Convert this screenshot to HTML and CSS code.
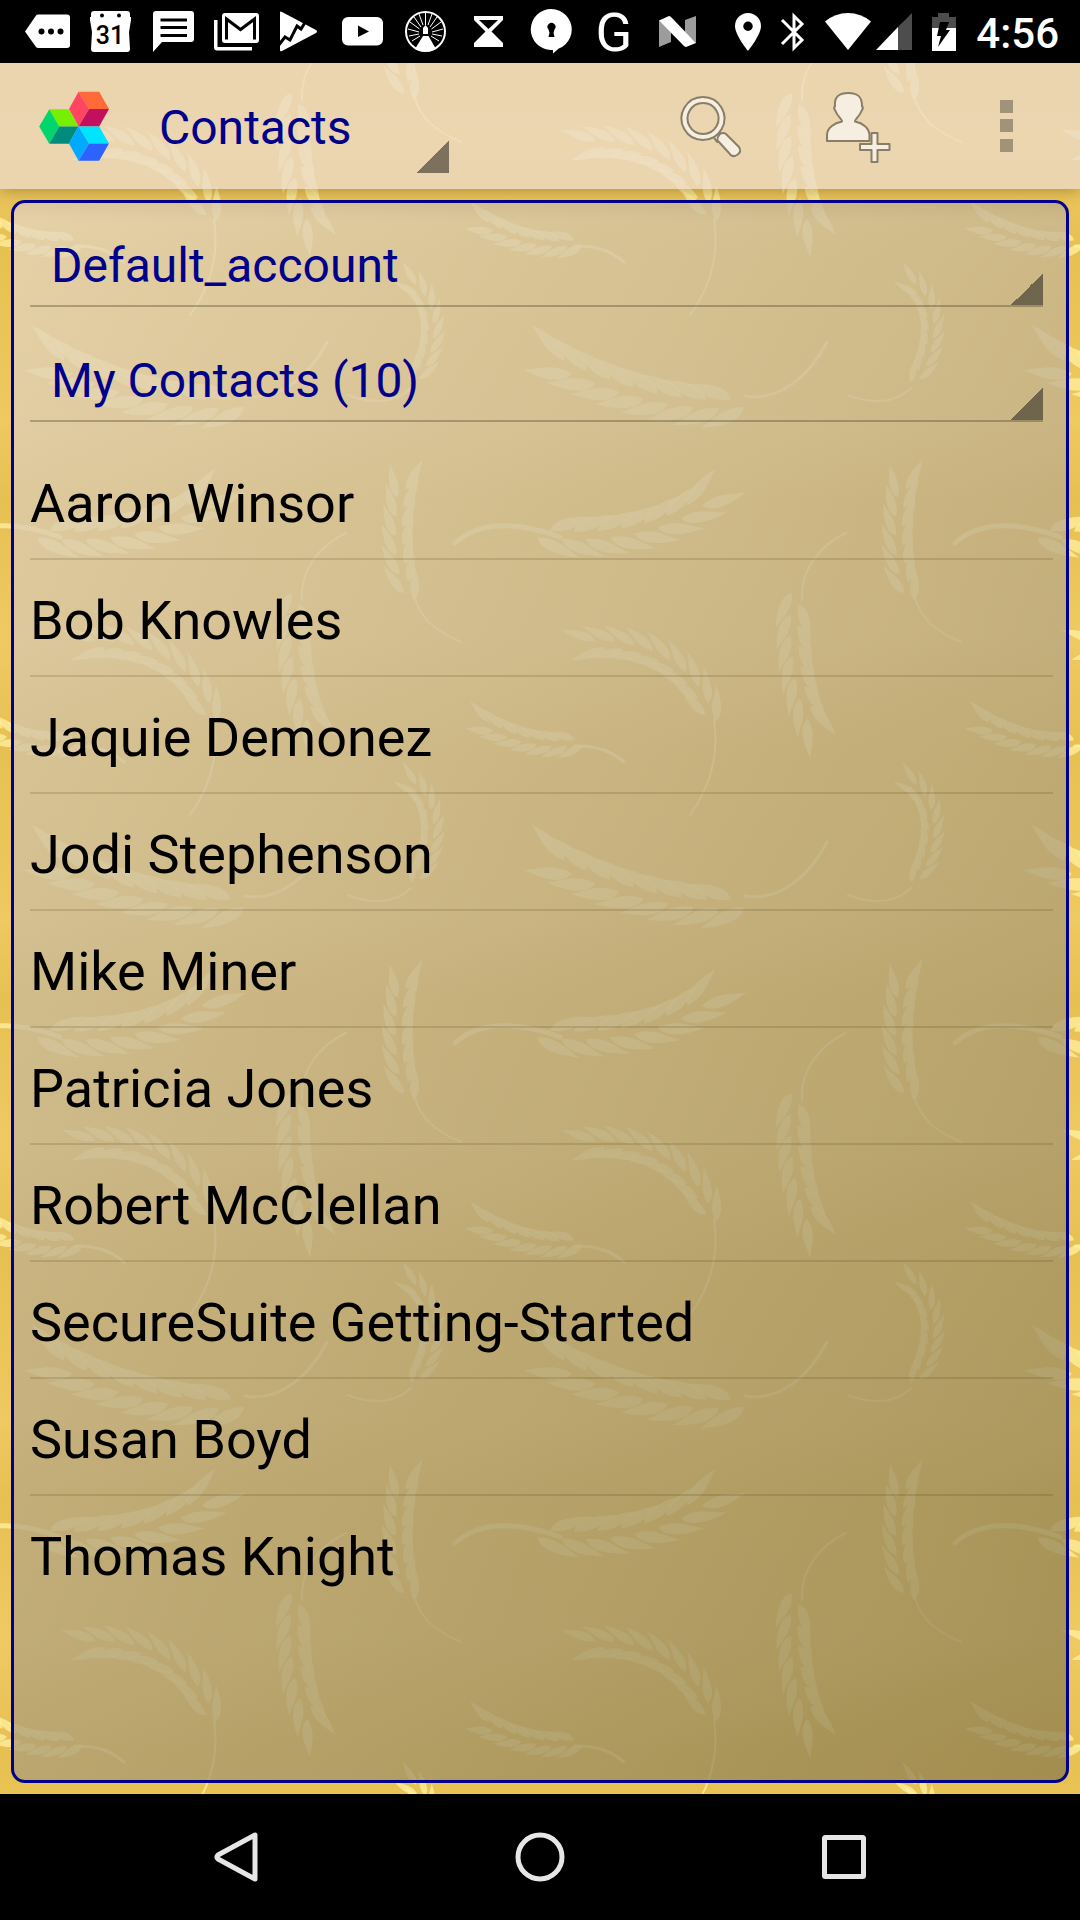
FILE: index.html
```html
<!DOCTYPE html>
<html lang="en">
<head>
<meta charset="utf-8">
<meta name="viewport" content="width=device-width, initial-scale=1">
<title>Contacts</title>
<link rel="stylesheet" href="styles.css">
</head>
<body>
<div class="screen">
  <svg class="wallpaper" aria-hidden="true"><defs><g id="wheat"></g></defs></svg>

  <div class="status-bar">
    <div class="notifications" aria-hidden="true">
      <svg viewBox="0 0 63 63"><path d="M9 31.500 20 15.500Q21 14.500 22 14.500H51Q54 14.500 54 17.500V45Q54 48 51 48H22Q21 48 20 47Z"/><g class="ink"><circle cx="25.500" cy="31.500" r="3"/><circle cx="35" cy="31.500" r="3"/><circle cx="44.500" cy="31.500" r="3"/></g></svg>
      <svg viewBox="0 0 63 63"><path d="M12 14Q12 11 15 11H48Q51 11 51 14V17H52V20L50 32 51 49Q51 52 48 52H15Q12 52 12 49L13 32 11 20V17H12Z"/><g class="ink"><circle cx="23" cy="15.500" r="2"/><circle cx="40" cy="15.500" r="2"/><text class="calendar-day" x="31" y="44" text-anchor="middle">31</text></g></svg>
      <svg viewBox="0 0 63 63"><path d="M11 52V14Q11 11 14 11H49Q52 11 52 14V39Q52 42 49 42H20Z"/><path class="ink-line" d="M18.500 20H45M18.500 27.500H45M18.500 35.500H45"/></svg>
      <svg viewBox="0 0 63 63"><path d="M9 20H12.500V47H47V50.500H12Q9 50.500 9 47Z"/><rect x="17" y="13" width="37" height="30" rx="3"/><path class="ink-line" d="M21.500 39.500V19L35.500 29.500 49.500 19V39.500"/></svg>
      <svg viewBox="0 0 63 63"><path d="M12 12Q12 11 14 12L48 30Q50 31.500 48 33L14 51Q12 52 12 50Z"/><path class="ink-line" d="M10 46 17 37 22 40 29 26 33 29 38 21"/></svg>
      <svg viewBox="0 0 63 63"><rect x="11" y="17" width="41" height="28.500" rx="6"/><path class="ink" d="M27 25.500 38 31.500 27 37Z"/></svg>
      <svg viewBox="0 0 63 63"><circle class="ring" cx="31.500" cy="31.500" r="19.500"/><path class="rays" d="M31.500 25V13M34 25 38 14M36 27 43 17M37.500 29 47 22M38 32 49 29M38 34 48 36M37 36 45 41M29 25 25 14M27 27 20 17M25.500 29 16 22M25 32 14 29M25 34 15 36M26 36 18 41"/><path d="M29 28 31.500 25 34 28V34H29ZM29 36H34.500L42 49Q31.500 54 21 49Z"/></svg>
      <svg viewBox="0 0 63 63"><path d="M17 16H46V20L34.500 31.500 46 43V47H17V43L28.500 31.500 17 20Z"/><path class="ink" d="M22 20H41L31.500 29Z"/></svg>
      <svg viewBox="0 0 63 63"><path d="M31.500 9A20.500 20.500 0 1 1 31 50V50A20.500 20.500 0 1 1 31.500 9M44 44 33 53.500V48Z"/><path class="ink" d="M28.500 29.500A4 4 0 1 1 34.500 29.500L33.500 33 34.500 37H28.500L29.500 33Z"/></svg>
      <svg viewBox="0 0 63 63"><text class="letter-g" x="31" y="51" text-anchor="middle">G</text></svg>
      <svg viewBox="0 0 63 63"><path class="dim" d="M13 20 25 32V42L13 47ZM39 20 50 16V43L39 32Z"/><path d="M13 20.500 23 16Q24 16 25 17L50 43 40 47Q39 47 38 46Z"/></svg>
    </div>
    <div class="system" aria-hidden="true">
      <svg width="26" height="38" viewBox="0 0 26 38"><path fill-rule="evenodd" d="M13 0A13 13 0 0 1 26 13C26 22 13 38 13 38S0 22 0 13A13 13 0 0 1 13 0M13 8.500A4.700 4.700 0 1 0 13 18 4.700 4.700 0 1 0 13 8.500"/></svg>
      <svg width="24" height="38" viewBox="0 0 24 38"><path class="line" d="M1 7 21 27 13 35V3L21 11 1 31"/></svg>
      <div class="signals">
        <svg width="46" height="38" viewBox="0 0 46 38"><path d="M23 37 0 8.500Q10 0 23 0T46 8.500Z"/></svg>
        <svg width="36" height="38" viewBox="0 0 36 38"><path class="faint" d="M36 0V37H22V14Z"/><path d="M0 37 22 14V37Z"/></svg>
      </div>
      <svg width="24" height="38" viewBox="0 0 24 38"><path class="faint" d="M6 0H17V4H24V15H0V4H6Z"/><path d="M0 15H24V38H0Z"/><path class="ink" d="M8 9H17L14 17H18L6 34 9 23H5Z"/></svg>
    </div>
    <time class="clock">4:56</time>
  </div>

  <header class="app-bar">
    <svg class="logo" width="70" height="72" viewBox="39 90 70 72" aria-hidden="true">
      <path fill="#ff6a38" d="M78.500 91.700H99.200L109 109H89Z"/><path fill="#ff4560" d="M78.500 91.700 89 109 78.500 126.500 69 109Z"/><path fill="#c2105e" d="M89 109H109L99.200 126.500H78.500Z"/>
      <path fill="#76f000" d="M49.300 109.300H69L78.500 126.500H59.200Z"/><path fill="#00d66b" d="M49.300 109.300 59.200 126.500 49.300 143.700 39.200 126.500Z"/><path fill="#008c7c" d="M59.200 126.500H78.500L69 143.700H49.300Z"/>
      <path fill="#00e5ff" d="M78.500 126.500H99.200L109 143.500H89Z"/><path fill="#00aaff" d="M78.500 126.500 89 143.500 78.500 160.700 69 143.500Z"/><path fill="#2e62ff" d="M89 143.500H109L99.200 160.700H78.500Z"/>
    </svg>
    <select class="dropdown view-select" aria-label="View"><option>Contacts</option></select>
    <div class="actions">
      <button class="action" type="button" aria-label="Search">
        <svg width="147" height="126" viewBox="639 63 147 126">
          <path class="outlined" d="M713 136 718 131 724 137 717 142Z"/>
          <path class="outlined" fill-rule="evenodd" d="M703 97A21.500 21.500 0 1 1 702.900 97M703 103A15.500 15.500 0 1 0 703.100 103"/>
          <path class="outlined" d="M720 134Q723 132 726 134L739 147Q742 152 737 155 732 158 729 153L718 141Q716 139 720 134Z"/>
        </svg>
      </button>
      <button class="action" type="button" aria-label="Add contact">
        <svg width="147" height="126" viewBox="786 63 147 126">
          <path class="outlined" d="M827 141V135C827 128 834 123 842 121.500 843 120 837 116 835.500 111 834 109 834 107 835 106 834 97 839 93 848.500 93S862 97 862 106C863 107 863 109 861.500 111 860 116 854 120 855 121.500 863 123 869 128 869.500 135V141Z"/>
          <path class="outlined" d="M871.500 133H877.500V144H889.500V150H877.500V162H871.500V150H860V144H871.500Z"/>
        </svg>
      </button>
      <button class="action" type="button" aria-label="More options">
        <svg width="147" height="126" viewBox="933 63 147 126"><path class="dots" d="M1000 100H1013V113H1000ZM1000 119H1013V132H1000ZM1000 139H1013V152H1000Z"/></svg>
      </button>
    </div>
  </header>

  <main class="content">
    <section class="panel">
      <div class="filters">
        <select class="dropdown filter" aria-label="Account"><option>Default_account</option></select>
        <select class="dropdown filter" aria-label="Group"><option>My Contacts (10)</option></select>
      </div>
      <ul class="contacts">
        <li><a href="#">Aaron Winsor</a></li>
        <li><a href="#">Bob Knowles</a></li>
        <li><a href="#">Jaquie Demonez</a></li>
        <li><a href="#">Jodi Stephenson</a></li>
        <li><a href="#">Mike Miner</a></li>
        <li><a href="#">Patricia Jones</a></li>
        <li><a href="#">Robert McClellan</a></li>
        <li><a href="#">SecureSuite Getting-Started</a></li>
        <li><a href="#">Susan Boyd</a></li>
        <li><a href="#">Thomas Knight</a></li>
      </ul>
    </section>
  </main>

  <nav class="nav-bar" aria-label="System">
    <button type="button" aria-label="Back"><svg width="56" height="56" viewBox="0 0 56 56"><path d="M47 6V50L10 30Q8 28 10 26Z"/></svg></button>
    <button type="button" aria-label="Home"><svg width="56" height="56" viewBox="0 0 56 56"><circle cx="28" cy="28" r="22"/></svg></button>
    <button type="button" aria-label="Recent apps"><svg width="56" height="56" viewBox="0 0 56 56"><rect x="8.500" y="8.500" width="39" height="39" rx="1"/></svg></button>
  </nav>
</div>
<script src="wheat.js"></script>
</body>
</html>
```
FILE: styles.css
```css
* {
  box-sizing: border-box;
}

body {
  margin: 0;
  font-family: Roboto, "Liberation Sans", sans-serif;
}

.screen {
  position: relative;
  display: flex;
  flex-direction: column;
  min-height: 100vh;
  overflow: hidden;
  background: repeating-linear-gradient(#e7c052 0, #efca63 140px, #e7c052 250px, #e9c354 300px, #efc961 420px, #e7c052 500px);
}

.wallpaper {
  position: absolute;
  inset: 0;
  width: 100%;
  height: 100%;
  fill: #fff0a0;
}

.wallpaper .kernel {
  opacity: 0.75;
}

.wallpaper .stem {
  fill: none;
  stroke: #fff0a0;
  stroke-linecap: round;
  opacity: 0.75;
}

.status-bar {
  position: relative;
  display: flex;
  align-items: center;
  height: 63px;
  padding: 0 21px 0 16px;
  background: #000;
  color: #fff;
}

.status-bar svg {
  display: block;
  flex: none;
  overflow: visible;
  fill: #fff;
}

.notifications {
  display: flex;
}

.notifications svg {
  width: 63px;
  height: 63px;
}

.status-bar .ink {
  fill: #000;
}

.status-bar .ink-line {
  fill: none;
  stroke: #000;
  stroke-width: 3;
}

.status-bar .line {
  fill: none;
  stroke: #fff;
  stroke-width: 3;
}

.status-bar .ring {
  fill: none;
  stroke: #fff;
  stroke-width: 2;
}

.status-bar .rays {
  stroke: #fff;
  stroke-width: 1;
}

.status-bar .dim {
  fill: #9c9c9c;
}

.status-bar .faint {
  fill: #4d4d4d;
}

.calendar-day {
  font-size: 25px;
  font-weight: 500;
}

.letter-g {
  font-size: 54px;
  font-weight: 400;
}

.system {
  display: flex;
  gap: 20px;
  margin-left: auto;
}

.signals {
  display: flex;
  gap: 5px;
}

.clock {
  margin-left: 20px;
  padding-top: 4px;
  font-size: 42px;
  font-weight: 500;
  line-height: 60px;
}

.app-bar {
  position: relative;
  display: flex;
  align-items: center;
  height: 126px;
  padding-left: 39px;
  background: rgba(234, 218, 203, 0.75);
  box-shadow: 0 2px 14px rgba(60, 40, 0, 0.35);
  clip-path: inset(0 0 -30px 0);
}

.dropdown {
  appearance: none;
  margin: 0;
  border: 0;
  border-radius: 0;
  background: linear-gradient(135deg, transparent 50%, rgba(50, 46, 38, 0.6) 50%) right bottom / 32px 32px no-repeat;
  color: #00008b;
  font: 48px/56px Roboto, "Liberation Sans", sans-serif;
}

.view-select {
  width: 300px;
  height: 94px;
  margin-left: 40px;
  padding: 4px 40px 0 10px;
}

.actions {
  display: flex;
  margin-left: auto;
}

.action {
  padding: 0;
  border: 0;
  background: none;
}

.action svg {
  display: block;
}

.outlined {
  fill: #f6eee0;
  stroke: #8a7d67;
  stroke-width: 2;
  stroke-linejoin: round;
}

.dots {
  fill: #a1937a;
}

.content {
  display: flex;
  flex: 1;
  padding: 11px;
}

.panel {
  position: relative;
  flex: 1;
  padding: 12px 13px 12px 16px;
  border: 3px solid #00008b;
  border-radius: 14px;
  background:
    linear-gradient(rgba(60, 40, 0, 0.06), transparent 18px),
    linear-gradient(140deg, rgba(230, 215, 196, 0.75), rgba(139, 124, 77, 0.75)) border-box;
}

.filters {
  display: flex;
  flex-direction: column;
  gap: 23px;
  padding-right: 10px;
}

.filter {
  width: 100%;
  height: 92px;
  padding: 12px 40px 0 21px;
  border-bottom: 2px solid rgba(60, 50, 30, 0.32);
}

.contacts {
  margin: 21px 0 0;
  padding: 0;
  list-style: none;
}

.contacts li + li {
  border-top: 2px solid rgba(70, 50, 10, 0.16);
}

.contacts a {
  display: block;
  padding: 29px 0 22px;
  color: #000;
  font-size: 54px;
  line-height: 64px;
  text-decoration: none;
}

.nav-bar {
  position: relative;
  display: flex;
  justify-content: center;
  height: 126px;
  background: #000;
}

.nav-bar button {
  width: 304px;
  padding: 0;
  border: 0;
  background: none;
}

.nav-bar svg {
  display: block;
  margin: 0 auto;
  fill: none;
  stroke: #e6e6e6;
  stroke-width: 5;
  stroke-linejoin: round;
}
```
FILE: wheat.js
```js
// Wallpaper: ears of wheat on a 500px tile, repeated over the whole screen.
const NS = "http://www.w3.org/2000/svg";
const TILE = 500;

// spine runs from the tip of the ear to its base; size is [kernel length, kernel width]
const ears = [
  { spine: "M50 358C100 385 178 412 250 402", stem: "M245 396C280 402 310 375 327 342", size: [48, 11], step: 25, width: 3 },
  { spine: "M210 494C175 525 115 542 33 533", stem: "M60 537C20 522 -20 520 -45 543", size: [46, 10], step: 24, width: 5 },
  { spine: "M404 478C397 520 395 560 411 602", stem: "M414 595C420 620 438 632 461 642", size: [34, 8], step: 19, width: 2 },
  { spine: "M316 728C300 700 290 650 296 588", stem: "M302 600C300 570 320 545 346 533", size: [38, 9], step: 21, width: 2 },
  { spine: "M85 645C138 640 195 660 214 728", stem: "M214 720C220 760 208 790 190 815", size: [36, 8], step: 19, width: 2 },
  { spine: "M480 221C508 236 538 248 582 242", stem: "M575 246C600 246 612 252 624 262", size: [28, 7], step: 15, width: 3 },
  { spine: "M408 282C436 300 440 345 411 388", stem: "M411 388C395 404 370 404 348 395", size: [26, 6], step: 14, width: 2 }
];

function add(parent, name, attributes) {
  const node = document.createElementNS(NS, name);
  for (const key in attributes) node.setAttribute(key, attributes[key]);
  parent.appendChild(node);
  return node;
}

const wallpaper = document.querySelector(".wallpaper");
const wheat = document.getElementById("wheat");

for (const ear of ears) {
  const spine = document.createElementNS(NS, "path");
  spine.setAttribute("d", ear.spine);
  add(wheat, "path", { d: ear.stem, class: "stem", "stroke-width": ear.width });
  const [length, width] = ear.size;
  const total = spine.getTotalLength();
  let side = 1;
  for (let at = ear.step / 2; at <= total; at += ear.step / 2) {
    const base = spine.getPointAtLength(at);
    const ahead = spine.getPointAtLength(at - 4);
    const angle = Math.atan2(ahead.y - base.y, ahead.x - base.x) * 180 / Math.PI + side * 17;
    add(wheat, "path", {
      class: "kernel",
      d: `M0 0C${length * 0.1} ${side * width * 0.9} ${length * 0.45} ${side * width * 1.1} ${length} ${side * width * 0.3}C${length * 0.6} ${-side * width * 0.1} ${length * 0.4} ${-side * width * 0.7} 0 0`,
      transform: `translate(${base.x} ${base.y}) rotate(${angle}) translate(0 ${side * width * 0.4})`
    });
    side = -side;
  }
}

function tile() {
  wallpaper.querySelectorAll("use").forEach(node => node.remove());
  for (let y = -TILE; y < wallpaper.clientHeight; y += TILE) {
    for (let x = -TILE; x < wallpaper.clientWidth; x += TILE) {
      add(wallpaper, "use", { href: "#wheat", x, y });
    }
  }
}

tile();
window.addEventListener("resize", tile);
```
